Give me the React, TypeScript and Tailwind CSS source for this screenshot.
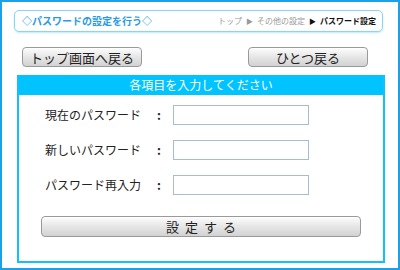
import React from 'react';

const jp = { fontFamily: '"Noto Sans CJK JP", "Noto Sans", sans-serif' };

function GrayButton({ label, className }: { label: string; className: string }) {
  return (
    <button
      className={`flex items-center justify-center px-0 rounded-[4px] border border-[#9a9a9a] bg-gradient-to-b from-[#fdfdfd] via-[#e6e6e6] to-[#d2d2d2] text-[#222] shadow-[inset_0_1px_0_#fff] ${className}`}
    >
      {label}
    </button>
  );
}

function Row({ label }: { label: string }) {
  return (
    <div className="flex items-center h-[20px]">
      <span className="w-[112px] text-[12px] text-[#222] leading-none">{label}</span>
      <span className="w-[16px] text-[12px] font-bold text-[#222] leading-none">:</span>
      <input
        type="password"
        className="w-[136px] h-[20px] border border-[#a8bccf] bg-white outline-none"
      />
    </div>
  );
}

export default function App() {
  return (
    <div style={jp} className="w-[400px] h-[270px] border-2 border-[#1ba1ea] bg-white pl-[12px] pt-[8px]">
      {/* title bar */}
      <div className="w-[369px] h-[22px] rounded-[5px] border border-[#86d6f6] shadow-[0_1px_2px_#bfe9fb] flex items-center justify-between pl-[7px] pr-[6px]">
        <span className="text-[10px] font-bold text-[#2a9be3] leading-none">◇パスワードの設定を行う◇</span>
        <span className="text-[8px] leading-none text-[#999] flex items-center gap-[4px]">
          <span>トップ</span>
          <span className="text-[7px]">▶</span>
          <span>その他の設定</span>
          <span className="text-[7px] text-[#111]">▶</span>
          <span className="font-bold text-[#111]">パスワード設定</span>
        </span>
      </div>

      {/* nav buttons */}
      <div className="flex justify-between w-[346px] ml-[8px] mt-[15px]">
        <GrayButton label="トップ画面へ戻る" className="w-[120px] h-[20px] text-[13px] leading-none" />
        <GrayButton label="ひとつ戻る" className="w-[120px] h-[20px] text-[13px] leading-none" />
      </div>

      {/* form panel */}
      <div className="w-[368px] h-[188px] ml-[3px] mt-[8px] border-2 border-[#13c0fb] border-t-0">
        <div className="h-[20px] bg-[#00c3ff] text-white text-[12px] leading-none flex items-center justify-center">
          各項目を入力してください
        </div>
        <div className="flex flex-col gap-[15px] pl-[26px] pt-[10px]">
          <Row label="現在のパスワード" />
          <Row label="新しいパスワード" />
          <Row label="パスワード再入力" />
        </div>
        <GrayButton
          label="設定する"
          className="w-[320px] h-[21px] ml-[22px] mt-[21px] pl-[6px] text-[13px] tracking-[6px] leading-none"
        />
      </div>
    </div>
  );
}
